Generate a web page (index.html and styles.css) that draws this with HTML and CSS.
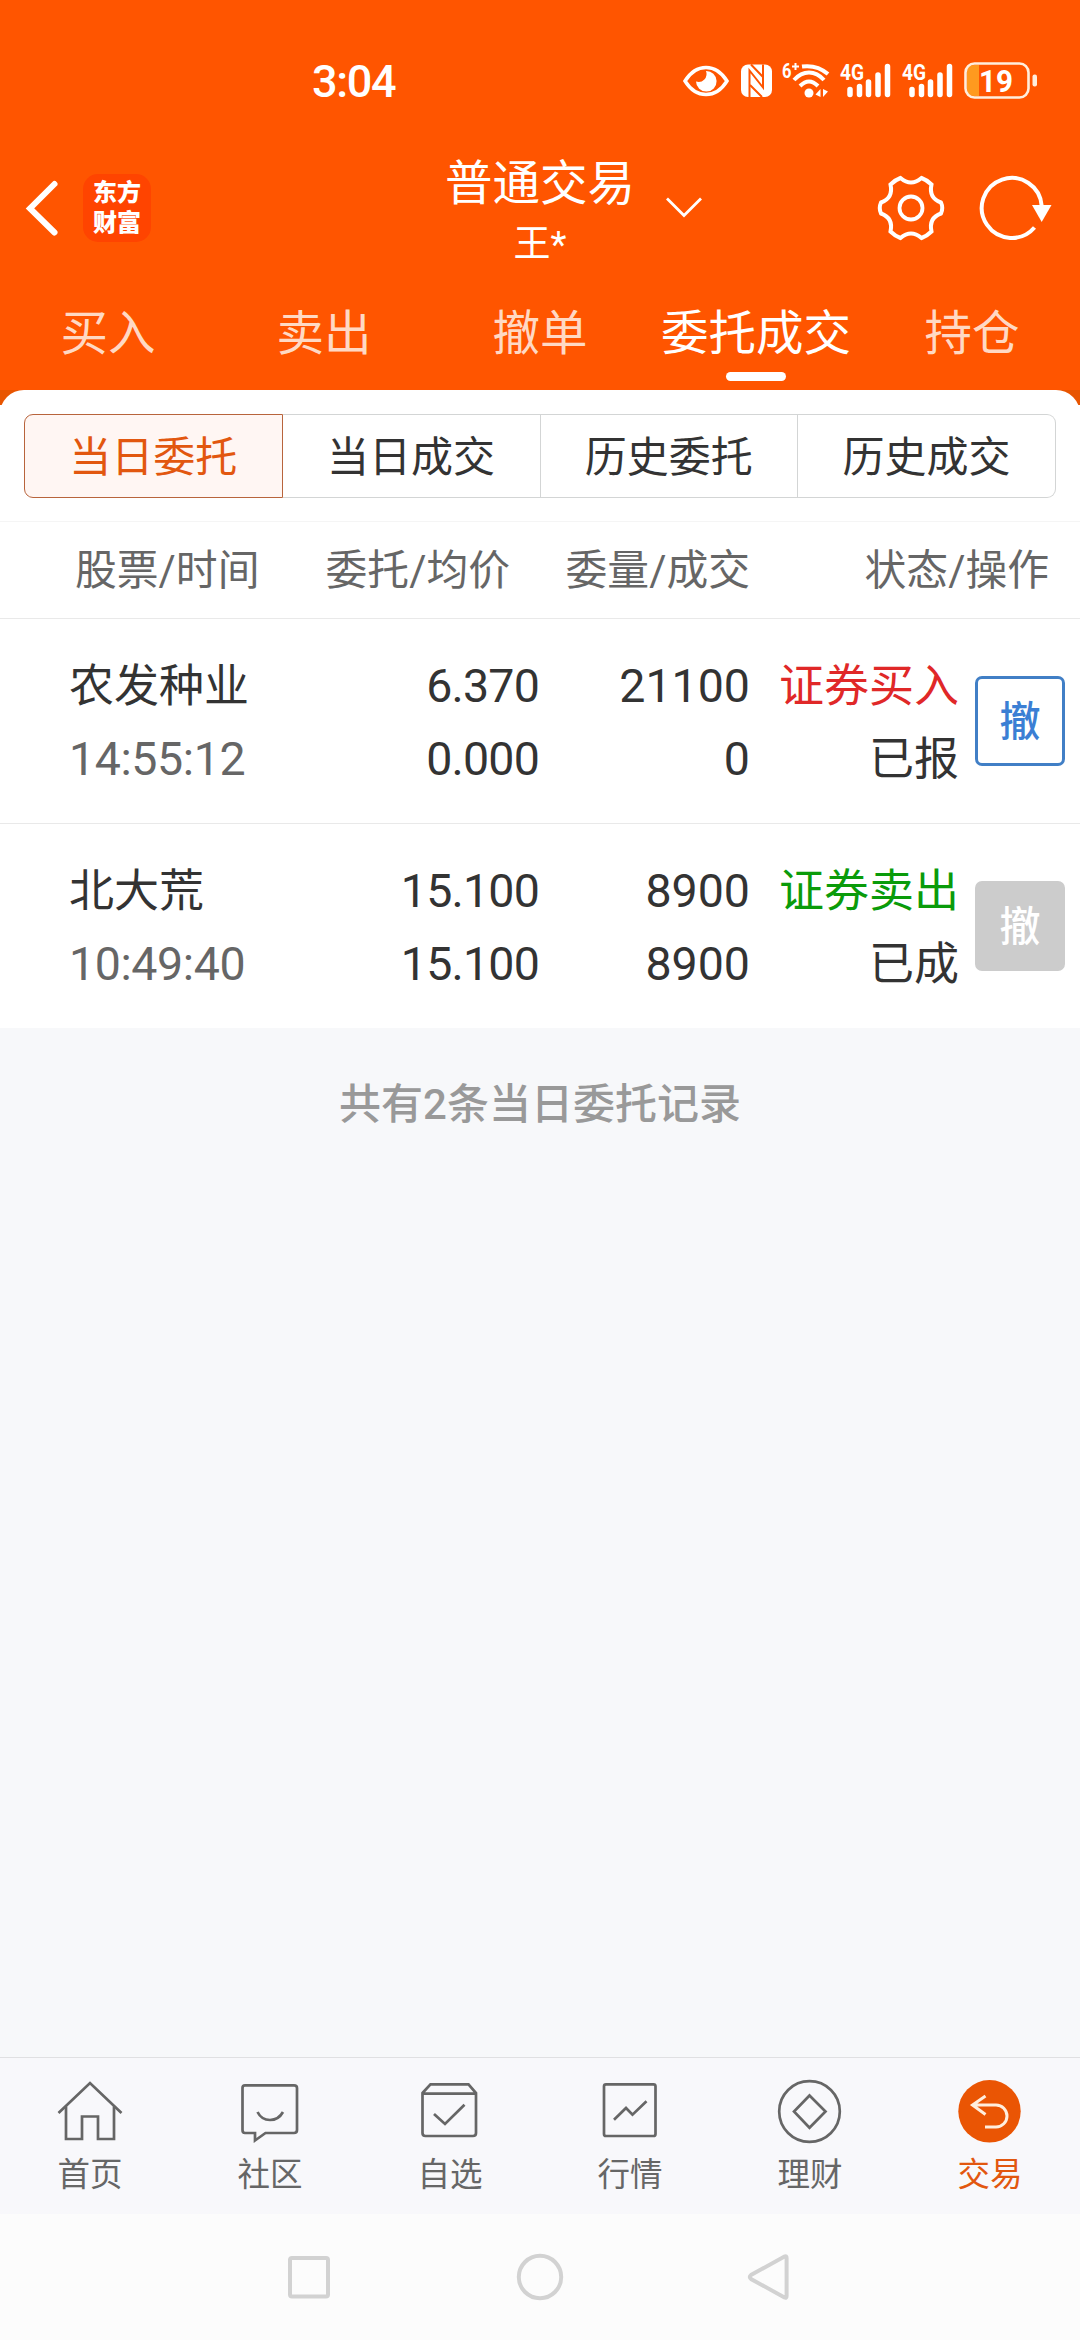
FILE: index.html
```html
<!DOCTYPE html>
<html lang="zh-CN">
<head>
    <meta charset="UTF-8">
    <meta name="viewport" content="width=device-width, initial-scale=1.0">
    <title>普通交易</title>
    <link rel="stylesheet" href="styles.css">
</head>
<body>
    <div class="app">
        <header class="header">
            <!-- Status bar -->
            <div class="status-bar">
                <span class="clock">3:04</span>
                <div class="status-icons">
                    <svg class="eye" width="46" height="40" viewBox="0 0 46 40">
                        <path d="M2 20C7 12 14 6.500 23 6.500S39 12 44 20C39 28 32 33.500 23 33.500S7 28 2 20Z" fill="none" stroke="#fff" stroke-width="3.500"/>
                        <path d="M23 10A10.300 10.300 0 1 1 13 20.500A8 8 0 0 0 23 10Z" fill="#fff"/>
                    </svg>
                    <svg class="nfc" width="31" height="40" viewBox="0 0 31 40">
                        <rect x="0" y="3.500" width="31" height="32.500" rx="7" fill="#fff"/>
                        <path d="M8.500 36V9.500L22 26.500V3.500" fill="none" stroke="#ff5500" stroke-width="2"/>
                        <path d="M10 3.500L22 16M9 24L21 36" fill="none" stroke="#ff5500" stroke-width="2"/>
                    </svg>
                    <svg class="wifi" width="49" height="40" viewBox="0 0 49 40">
                        <text x="0" y="17" class="wifi-gen" textLength="9.500" lengthAdjust="spacingAndGlyphs">6</text>
                        <path d="M10 5.500H17M13.500 2V9" stroke="#fff" stroke-width="2"/>
                        <path d="M20 5.500C31 4 39 7 46 13" fill="none" stroke="#fff" stroke-width="4"/>
                        <path d="M12 19C21 9 33 9 42 19" fill="none" stroke="#fff" stroke-width="4"/>
                        <path d="M18 25C24 19 30 19 36 25" fill="none" stroke="#fff" stroke-width="4"/>
                        <circle cx="27" cy="32" r="4.500" fill="#fff"/>
                        <path d="M38.500 28V36L33.500 33.500ZM41 28V36L46 30.500Z" fill="#fff"/>
                    </svg>
                    <svg class="signal" width="51" height="40" viewBox="0 0 51 40">
                        <text x="0" y="19" class="net" textLength="24" lengthAdjust="spacingAndGlyphs">4G</text>
                        <path d="M10 28.500V33.500M19.500 25.500V33.500M28.500 21V33.500M38 14V33.500M47.500 5.500V33.500" stroke="#fff" stroke-width="5.500" stroke-linecap="round"/>
                    </svg>
                    <svg class="signal second" width="51" height="40" viewBox="0 0 51 40">
                        <text x="0" y="19" class="net" textLength="24" lengthAdjust="spacingAndGlyphs">4G</text>
                        <path d="M10 28.500V33.500M19.500 25.500V33.500M28.500 21V33.500M38 14V33.500M47.500 5.500V33.500" stroke="#fff" stroke-width="5.500" stroke-linecap="round"/>
                    </svg>
                    <svg class="battery" width="74" height="40" viewBox="0 0 74 40">
                        <path d="M10 4H15V35H10Q3 35 3 28V11Q3 4 10 4Z" fill="#ff9a1f"/>
                        <rect x="1.500" y="2.500" width="63" height="34" rx="9" fill="none" stroke="#ffeedd" stroke-width="2.600"/>
                        <rect x="68.500" y="13.500" width="4.500" height="12" rx="2" fill="#ffeedd"/>
                        <text x="15" y="31" class="level" textLength="34" lengthAdjust="spacingAndGlyphs">19</text>
                    </svg>
                </div>
            </div>

            <!-- Title bar -->
            <div class="title-bar">
                <div class="title-left">
                    <svg width="34" height="60" viewBox="0 0 34 60">
                        <path d="M29.500 6L5 30.500L29.500 54.500" fill="none" stroke="#fff" stroke-width="6" stroke-linecap="round"/>
                    </svg>
                    <div class="logo"><span>东方</span><span>财富</span></div>
                </div>
                <div class="title-center">
                    <div class="title">普通交易</div>
                    <div class="account">王*</div>
                </div>
                <div class="title-right">
                    <svg class="arrow-down" width="38" height="24" viewBox="0 0 38 24">
                        <path d="M2 2.500L19 19.500L36 2.500" fill="none" stroke="#fff" stroke-width="2.800"/>
                    </svg>
                    <svg class="gear" width="70" height="70" viewBox="0 0 70 70">
                        <path d="M24.500 5Q35 14 45.500 5Q51 7 55.500 11.500Q52.500 25 65 29.500Q67.500 35 65 40.500Q52.500 45 55.500 58.500Q51 63 45.500 65Q35 56 24.500 65Q19 63 14.500 58.500Q17.500 45 5 40.500Q2.500 35 5 29.500Q17.500 25 14.500 11.500Q19 7 24.500 5Z" fill="none" stroke="#fff" stroke-width="4"/>
                        <circle cx="35" cy="35" r="11.500" fill="none" stroke="#fff" stroke-width="3.800"/>
                    </svg>
                    <svg class="refresh" width="74" height="70" viewBox="0 0 74 70">
                        <path d="M56.500 54.500A30 30 0 1 1 63.700 33" fill="none" stroke="#fff" stroke-width="4"/>
                        <path d="M54 32H73.500L63.700 49Z" fill="#fff"/>
                    </svg>
                </div>
            </div>

            <nav class="tabs">
                <div class="tab">买入</div>
                <div class="tab">卖出</div>
                <div class="tab">撤单</div>
                <div class="tab active">委托成交</div>
                <div class="tab">持仓</div>
            </nav>
        </header>

        <!-- Orders -->
        <div class="panel-wrap">
            <main class="panel">
                <div class="segments">
                    <div class="segment active">当日委托</div>
                    <div class="segment">当日成交</div>
                    <div class="segment">历史委托</div>
                    <div class="segment">历史成交</div>
                </div>

                <div class="list-head">
                    <div class="col-name">股票/时间</div>
                    <div class="col-price">委托/均价</div>
                    <div class="col-amount">委量/成交</div>
                    <div class="col-state">状态/操作</div>
                </div>

                <div class="order">
                    <div class="col-name"><div>农发种业</div><div class="num time">14:55:12</div></div>
                    <div class="col-price num"><div>6.370</div><div>0.000</div></div>
                    <div class="col-amount num"><div>21100</div><div>0</div></div>
                    <div class="col-state"><div class="buy">证券买入</div><div>已报</div></div>
                    <button class="cancel">撤</button>
                </div>
                <div class="order">
                    <div class="col-name"><div>北大荒</div><div class="num time">10:49:40</div></div>
                    <div class="col-price num"><div>15.100</div><div>15.100</div></div>
                    <div class="col-amount num"><div>8900</div><div>8900</div></div>
                    <div class="col-state"><div class="sell">证券卖出</div><div>已成</div></div>
                    <button class="cancel disabled">撤</button>
                </div>
            </main>
        </div>

        <div class="summary">共有2条当日委托记录</div>

        <!-- Bottom menu -->
        <nav class="bottom-menu">
            <div class="menu-item">
                <svg width="66" height="66" viewBox="0 0 66 66">
                    <path d="M1.500 34L33 4L64.500 34" />
                    <path d="M9 27.500V60H25V37.500H41V60H57V27.500" />
                </svg>
                <span>首页</span>
            </div>
            <div class="menu-item">
                <svg width="66" height="66" viewBox="0 0 66 66">
                    <path d="M8 6.300H57Q60 6.300 60 9V51Q60 54 57 54H28.500L18 61.500V54H8Q5.500 54 5.500 51V9Q5.500 6.300 8 6.300Z" />
                    <path d="M20.500 33Q24.500 41 33 41T46 33" />
                </svg>
                <span>社区</span>
            </div>
            <div class="menu-item">
                <svg width="66" height="66" viewBox="0 0 66 66">
                    <path d="M5.500 14L13.500 5.300H51.500L59 14V54Q59 57 56 57H8.500Q5.500 57 5.500 54ZM5.500 14.700H59" />
                    <path d="M17 35L28 45L47.500 25.700" />
                </svg>
                <span>自选</span>
            </div>
            <div class="menu-item">
                <svg width="66" height="66" viewBox="0 0 66 66">
                    <rect x="7" y="5.300" width="51.500" height="51.700" rx="2" />
                    <path d="M17 40.700L29 29L35.500 35.700L49.500 22.300" />
                </svg>
                <span>行情</span>
            </div>
            <div class="menu-item">
                <svg width="66" height="66" viewBox="0 0 66 66">
                    <circle cx="32.500" cy="32.500" r="30.300" />
                    <path d="M32.500 16.500L48.500 32.500L32.500 48.700L17 32.500Z" />
                </svg>
                <span>理财</span>
            </div>
            <div class="menu-item active">
                <svg width="66" height="66" viewBox="0 0 66 66">
                    <circle cx="32.500" cy="32.300" r="31.200" class="trade-dot" />
                    <path class="trade-arrow" d="M28.500 17L15.500 26L28.500 35.500M16 26H39A11 11 0 0 1 39 48H28" />
                </svg>
                <span>交易</span>
            </div>
        </nav>

        <!-- System navigation -->
        <div class="system-nav">
            <svg width="50" height="50" viewBox="0 0 50 50"><rect x="6" y="6" width="38" height="38.500" rx="2" /></svg>
            <svg width="50" height="50" viewBox="0 0 50 50"><circle cx="25" cy="25" r="21.200" /></svg>
            <svg width="50" height="50" viewBox="0 0 50 50"><path d="M38.500 4.500Q40.600 3.500 40.600 6V44Q40.600 46.500 38.500 45.500L5 27Q2.500 25 5 23Z" /></svg>
        </div>
    </div>
</body>
</html>
```
FILE: styles.css
```css
/* Basic styling */
* {
    box-sizing: border-box;
}

body {
    margin: 0;
    font-family: Roboto, "Noto Sans CJK SC", sans-serif;
    background: #f7f8fa;
    color: #333;
}

svg {
    display: block;
    flex: none;
    overflow: visible;
}

.app {
    width: 1080px;
    height: 2340px;
    display: flex;
    flex-direction: column;
    overflow: hidden;
}

/* Header */
.header {
    height: 390px;
    background: #ff5500;
    color: #fff;
}

.status-bar {
    height: 110px;
    padding: 52px 42px 0 312px;
    display: flex;
    justify-content: space-between;
    align-items: center;
}

.clock {
    padding-top: 2px;
    font-size: 45px;
    font-weight: 500;
    line-height: 56px;
    letter-spacing: -1.300px;
}

.status-icons {
    display: flex;
}

.nfc {
    margin-left: 12px;
}

.wifi {
    margin-left: 10px;
}

.signal {
    margin-left: 9px;
}

.signal.second {
    margin-left: 11px;
}

.battery {
    margin-left: 11px;
}

.status-icons text {
    fill: #fff;
    font-family: Roboto, sans-serif;
    font-weight: 700;
}

.status-icons .wifi-gen {
    font-size: 21px;
}

.status-icons .net {
    font-size: 22px;
}

.status-icons .level {
    font-size: 32px;
}

.title-bar {
    height: 196px;
    display: grid;
    grid-template-columns: 440px 200px 1fr;
    align-items: center;
}

.title-left,
.title-right {
    display: flex;
    align-items: center;
}

.title-left {
    padding-left: 25px;
}

.logo {
    width: 68px;
    height: 68px;
    margin-left: 24px;
    padding-top: 4px;
    border-radius: 15px;
    background: #ff4400;
    display: flex;
    flex-direction: column;
    align-items: center;
    font-size: 24px;
    font-weight: 900;
    line-height: 30px;
}

.title-center {
    padding-top: 10px;
    text-align: center;
}

.title {
    font-size: 47.500px;
    line-height: 63px;
}

.account {
    font-size: 37px;
    line-height: 58px;
}

.arrow-down {
    margin-left: 25px;
}

.gear {
    margin-left: 173px;
}

.refresh {
    margin-left: 32px;
}

/* Trade tabs */
.tabs {
    display: flex;
}

.tab {
    flex: 1;
    text-align: center;
    font-size: 47.500px;
    line-height: 57px;
    white-space: nowrap;
    color: #ffd9c4;
}

.tab.active {
    color: #fff;
}

.tab.active::after {
    content: "";
    display: block;
    width: 60px;
    height: 9px;
    margin: 9px auto 0;
    border-radius: 5px;
    background: #fff;
}

/* Order list */
.panel-wrap {
    background: linear-gradient(#e85500 15px, #fff 15px);
}

.panel {
    padding-top: 24px;
    background: #fff;
    border-radius: 24px 24px 0 0;
}

.segments {
    display: flex;
    height: 107px;
    padding: 0 24px 23px;
}

.segment {
    flex: 1;
    border: 1px solid #d3d5d5;
    border-left-width: 0;
    text-align: center;
    font-size: 42px;
    line-height: 85px;
}

.segment:last-child {
    border-radius: 0 9px 9px 0;
}

.segment.active {
    border: 1px solid #b8643c;
    border-radius: 9px 0 0 9px;
    background: #fff6f3;
    color: #e2570f;
}

.list-head {
    height: 98px;
    display: flex;
    border-top: 1px solid #f5f5f5;
    border-bottom: 1px solid #e9e9e9;
    font-size: 41.800px;
    line-height: 98px;
    color: #666;
}

.order {
    height: 205px;
    padding-top: 31px;
    display: flex;
    border-bottom: 1px solid #e9e9e9;
    font-size: 45px;
    line-height: 73px;
}

.order:last-child {
    height: 204px;
    border-bottom: none;
}

.col-name {
    width: 290px;
    padding-left: 69px;
}

.col-price {
    width: 250px;
    text-align: right;
}

.col-amount {
    width: 210px;
    text-align: right;
}

.col-state {
    width: 209px;
    text-align: right;
}

.list-head .col-name {
    padding-left: 75px;
}

.list-head .col-price {
    width: 220px;
}

.list-head .col-amount {
    width: 240px;
}

.list-head .col-state {
    width: 299px;
}

.num {
    font-size: 46.500px;
}

.order .col-price {
    padding-right: 1px;
    letter-spacing: -0.800px;
}

.time {
    color: #666;
    letter-spacing: -0.400px;
}

.buy {
    color: #e02828;
}

.sell {
    color: #0a9b0a;
}

.cancel {
    width: 90px;
    height: 90px;
    margin: 26px 0 0 16px;
    padding: 2px 0 0;
    border: 3px solid #417fc6;
    border-radius: 7px;
    background: #fff;
    color: #3b7fd4;
    font-family: Roboto, "Noto Sans CJK SC", sans-serif;
    font-size: 41px;
    font-weight: 500;
    line-height: 82px;
}

.cancel.disabled {
    border-color: #ccc;
    background: #ccc;
    color: #fff;
}

.summary {
    flex: 1;
    padding-top: 47px;
    text-align: center;
    font-size: 42px;
    font-weight: 500;
    line-height: 60px;
    color: #999;
}

/* Bottom menu */
.bottom-menu {
    height: 157px;
    padding-top: 21px;
    display: flex;
    border-top: 1px solid #e0e0e2;
    background: #f8f8fb;
}

.menu-item {
    flex: 1;
    display: flex;
    flex-direction: column;
    align-items: center;
    font-size: 32.500px;
    line-height: 60px;
    color: #666;
}

.menu-item svg {
    fill: none;
    stroke: #666;
    stroke-width: 2.700;
}

.menu-item.active {
    color: #e2570f;
}

.menu-item .trade-dot {
    fill: #ea5504;
    stroke: none;
}

.menu-item .trade-arrow {
    stroke: #ffeedd;
    stroke-width: 3;
}

/* System navigation */
.system-nav {
    height: 126px;
    padding: 0 284px;
    display: flex;
    align-items: center;
    justify-content: space-between;
    background: #fcfcfc;
}

.system-nav svg {
    fill: none;
    stroke: #d2d2d2;
    stroke-width: 4;
}
```
